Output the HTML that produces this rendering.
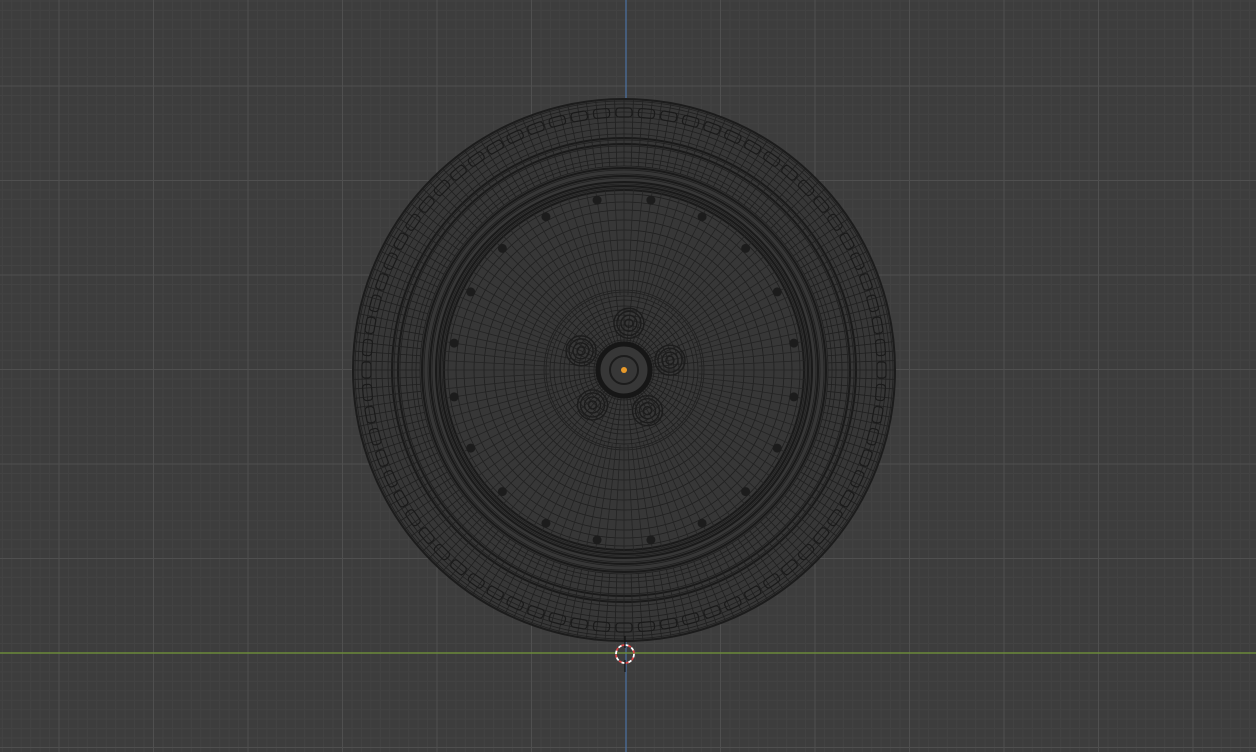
<!DOCTYPE html>
<html><head><meta charset="utf-8"><style>
html,body{margin:0;padding:0;background:#3d3d3d;overflow:hidden}
svg{display:block}
</style></head><body>
<svg id="s" width="1256" height="752" viewBox="0 0 1256 752" xmlns="http://www.w3.org/2000/svg">
<rect width="1256" height="752" fill="#3d3d3d"/>
<g id="minor" stroke="#434343" stroke-width="1"></g>
<g id="major" stroke="#4f4f4f" stroke-width="1"></g>
<line x1="626" y1="0" x2="626" y2="752" stroke="#4a6e9c" stroke-width="1.3"/>
<circle cx="624" cy="370" r="271" fill="#373737" stroke="#1c1c1c" stroke-width="2"/>
<g id="wheel" fill="none" stroke="#202020" stroke-width="0.8"></g>
<line x1="0" y1="653" x2="1256" y2="653" stroke="#6b8a3a" stroke-width="1.5"/>
<circle cx="625" cy="654" r="9" fill="none" stroke="#fff" stroke-width="1.8" stroke-dasharray="4 3"/>
<circle cx="625" cy="654" r="9" fill="none" stroke="#d44" stroke-width="1.8" stroke-dasharray="3 4" stroke-dashoffset="3.5"/>
<line x1="625" y1="660" x2="625" y2="672" stroke="#111" stroke-width="1.2"/>
<line x1="625" y1="636" x2="625" y2="648" stroke="#111" stroke-width="1.2"/>
<circle cx="624" cy="370" r="3" fill="#e89a2a"/>
</svg>
<script>
var NS="http://www.w3.org/2000/svg";
function el(p,t,a){var e=document.createElementNS(NS,t);for(var k in a)e.setAttribute(k,a[k]);p.appendChild(e);return e;}
var mi=document.getElementById('minor'),ma=document.getElementById('major'),w=document.getElementById('wheel');
var S=94.5,ox=626,oy=653;
for(var i=-80;i<80;i++){var x=ox+i*S/10,y=oy+i*S/10;
 var g=(i%10==0)?ma:mi;
 if(x>=0&&x<=1256&&i!=0)el(g,'line',{x1:x,y1:0,x2:x,y2:752});
 if(y>=0&&y<=752&&i!=0)el(g,'line',{x1:0,y1:y,x2:1256,y2:y});}
var cx=624,cy=370;
[269,266,262,258,253,248,242,236,230,224,218,212,208,204,200,196,192,188,186,182,176,168,160,150,140,130,120,110,100,90,80,78,74,70,64,60,55,50,45,40,35,30].forEach(function(r){el(w,'circle',{cx:cx,cy:cy,r:r});});
[202,194,188,184,180,226,232].forEach(function(r){el(w,'circle',{cx:cx,cy:cy,r:r,'stroke-width':2,stroke:'#1a1a1a'});});
for(var a=0;a<360;a+=2){var t=a*Math.PI/180;el(w,'line',{x1:cx+204*Math.cos(t),y1:cy+204*Math.sin(t),x2:cx+270*Math.cos(t),y2:cy+270*Math.sin(t)});}
for(var a=0;a<360;a+=5){var t=a*Math.PI/180;el(w,'rect',{x:-8,y:-4,width:16,height:9,rx:3,transform:'translate('+(cx+258*Math.cos(t))+','+(cy+258*Math.sin(t))+') rotate('+(a+90)+')',stroke:'#1a1a1a','stroke-width':1.2});}
for(var a=0;a<360;a+=3){var t=a*Math.PI/180;el(w,'line',{x1:cx+75*Math.cos(t),y1:cy+75*Math.sin(t),x2:cx+182*Math.cos(t),y2:cy+182*Math.sin(t),stroke:'#242424'});}
for(var a=0;a<360;a+=6){var t=a*Math.PI/180;el(w,'line',{x1:cx+28*Math.cos(t),y1:cy+28*Math.sin(t),x2:cx+75*Math.cos(t),y2:cy+75*Math.sin(t)});}
for(var k=0;k<20;k++){var t=(k*18+9)*Math.PI/180;el(w,'circle',{cx:cx+172*Math.cos(t),cy:cy+172*Math.sin(t),r:4.5,fill:'#1c1c1c',stroke:'none'});}
for(var k=0;k<5;k++){var t=(-84+k*72)*Math.PI/180,x=cx+47*Math.cos(t),y=cy+47*Math.sin(t);
 [15,12,8,4].forEach(function(r){el(w,'circle',{cx:x,cy:y,r:r,'stroke-width':1.4,stroke:'#1c1c1c'});});}
el(w,'circle',{cx:cx,cy:cy,r:26,stroke:'#161616','stroke-width':5});
el(w,'circle',{cx:cx,cy:cy,r:14,stroke:'#1c1c1c','stroke-width':2});
</script>
</body></html>
